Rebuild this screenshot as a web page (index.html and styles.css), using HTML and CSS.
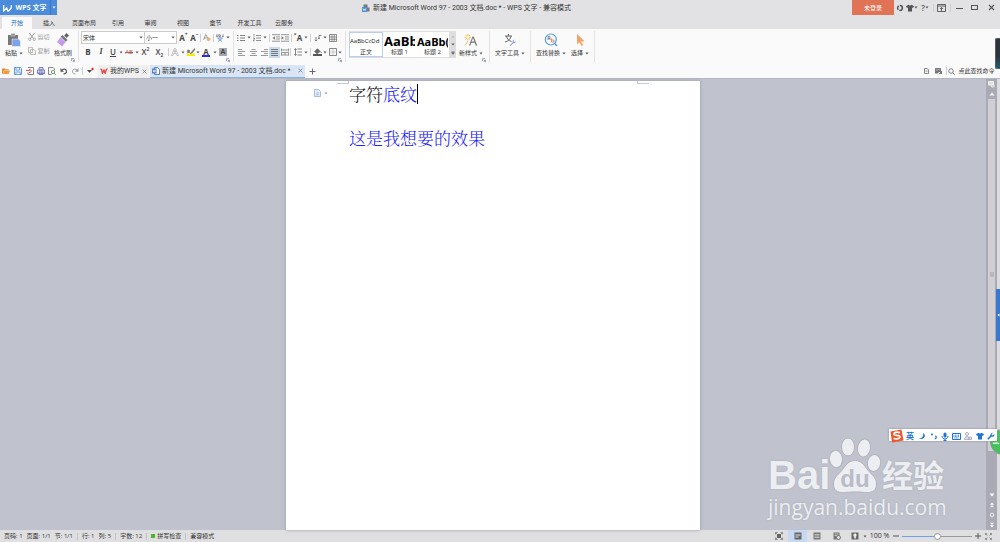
FILE: index.html
```html
<!DOCTYPE html>
<html lang="zh-CN">
<head>
    <meta charset="UTF-8">
    <meta name="viewport" content="width=device-width, initial-scale=1.0">
    <title>新建 Microsoft Word 97 - 2003 文档.doc * - WPS 文字</title>
    <link rel="stylesheet" href="styles.css">
</head>
<body>
    <!-- shared icons -->
    <svg class="sprite" aria-hidden="true">
        <symbol id="caret" viewBox="0 0 4 3"><path d="M.5 .5h3L2 2.4z" fill="#555"/></symbol>
        <symbol id="launcher" viewBox="0 0 4 4"><path d="M.5 3V.5H3M1.5 3.5h2v-2M1.6 1.6l1.7 1.7" fill="none" stroke="#8287a8" stroke-width=".7"/></symbol>
        <symbol id="doc" viewBox="0 0 8 8"><path d="M2.5.5h3l2 2v5h-5z" fill="#fff" stroke="#5b83b8"/><path d="M0 1.5h4.5v5H0z" fill="#4b7fc4"/><path d="M1 2.7l.7 2.5.6-2 .6 2 .7-2.5" fill="none" stroke="#fff" stroke-width=".6"/></symbol>
        <symbol id="shirt" viewBox="0 0 8 8"><path d="M2.4.8c.8.8 2.4.8 3.2 0L8 2.2 7 4l-1-.4v3.9H2V3.6L1 4 0 2.2z" fill="currentColor"/></symbol>
    </svg>

    <header class="titlebar">
        <button class="app-button">
            <svg width="9" height="8" viewBox="0 0 9 8"><path d="M.7 1v6l3-3 1.1 3h.7L8.3 4V1" fill="none" stroke="#fff" stroke-width="1.3"/></svg>
            <b>WPS 文字</b>
            <span class="app-drop"><svg width="4" height="3" viewBox="0 0 4 3"><path d="M.5.5h3L2 2.4z" fill="#fff"/></svg></span>
        </button>
        <div class="title">
            <svg width="8" height="8" viewBox="0 0 8 8"><path d="M1.5.5h4v3h2v4h-6z" fill="#777"/><path d="M0 3h5v5H0z" fill="#4b8fd4"/><path d="M1 4.3l.8 2.3.7-1.6.7 1.6.8-2.3" stroke="#fff" stroke-width=".6" fill="none"/></svg>
            <span>新建 Microsoft Word 97 - 2003 文档.doc * - WPS 文字 - 兼容模式</span>
        </div>
        <button class="login">未登录</button>
        <div class="window-tools">
            <button aria-label="社区"><svg width="8" height="8" viewBox="0 0 8 8"><circle cx="4" cy="4" r="2.400" fill="none" stroke="#555" stroke-width="1.500" stroke-dasharray="4 1"/></svg></button>
            <button aria-label="皮肤"><svg width="8" height="8"><use href="#shirt"/></svg><svg width="4" height="3"><use href="#caret"/></svg></button>
            <button aria-label="帮助">?<svg width="4" height="3"><use href="#caret"/></svg></button>
            <i></i>
            <button aria-label="隐藏功能区"><svg width="9" height="8" viewBox="0 0 9 8"><path d="M.5.5h8v7h-8zM.5 2h8M4.500 7V3.500M3 5l1.500-1.600L6 5" fill="none" stroke="#555" stroke-width=".9"/></svg></button>
            <i></i>
            <button aria-label="最小化"><svg width="7" height="7" viewBox="0 0 7 7"><path d="M0 4.500h7" stroke="#555"/></svg></button>
            <button aria-label="最大化"><svg width="7" height="7" viewBox="0 0 7 7"><path d="M.5 1.500h6v4h-6z" fill="none" stroke="#555" stroke-width="1.100"/></svg></button>
            <button aria-label="关闭"><svg width="7" height="7" viewBox="0 0 7 7"><path d="M1 1l5 5M6 1L1 6" stroke="#555" stroke-width="1.100"/></svg></button>
        </div>
    </header>

    <nav class="menu-tabs">
        <a href="#" class="active">开始</a>
        <a href="#">插入</a>
        <a href="#">页面布局</a>
        <a href="#">引用</a>
        <a href="#">审阅</a>
        <a href="#">视图</a>
        <a href="#">章节</a>
        <a href="#">开发工具</a>
        <a href="#">云服务</a>
    </nav>

    <section class="ribbon">
        <div class="group clipboard">
            <button class="big">
                <svg width="14" height="14" viewBox="0 0 14 14"><path d="M1 2h10v10H1z" fill="#777"/><path d="M4 .5h4V3H4z" fill="#888" stroke="#eee" stroke-width=".5"/><path d="M5 6h6.500L13.500 8v5.500H5z" fill="#7ba2ea" stroke="#fff" stroke-width=".5"/></svg>
                <span>粘贴<svg width="4" height="3"><use href="#caret"/></svg></span>
            </button>
            <div class="cut-copy">
                <button><svg width="8" height="8" viewBox="0 0 8 8"><path d="M1.500 0L5.500 5.500M6.500 0l-4 5.500" stroke="#999"/><circle cx="1.700" cy="6.300" r="1.200" fill="none" stroke="#999" stroke-width=".8"/><circle cx="6.300" cy="6.300" r="1.200" fill="none" stroke="#999" stroke-width=".8"/></svg>剪切</button>
                <button><svg width="8" height="8" viewBox="0 0 8 8"><path d="M.5.5h4v5h-4zM2.500 2.500h3.500L7.500 4v3.500h-5z" fill="#f6f6f6" stroke="#b5b5b5" stroke-width=".9"/></svg>复制</button>
            </div>
            <button class="big">
                <svg width="14" height="14" viewBox="0 0 14 14"><path d="M10.500 0L13 2.500 10.500 5 8.200 2.500z" fill="#666"/><path d="M6.500 2L11.500 7l-1.800 1.800-5-5z" fill="#777"/><path d="M4.500 4.200L9.500 9.200 6 13.500 1 9z" fill="#c59be9"/></svg>
                <span>格式刷</span>
            </button>
            <button class="launch" aria-label="剪贴板设置"><svg width="4" height="4"><use href="#launcher"/></svg></button>
        </div>

        <div class="group font">
            <div class="row font-top">
                <label class="combo"><select aria-label="字体"><option>宋体</option></select><svg width="4" height="3"><use href="#caret"/></svg></label>
                <label class="combo"><select aria-label="字号"><option>小一</option></select><svg width="4" height="3"><use href="#caret"/></svg></label>
                <button class="letter">A<sup>+</sup></button>
                <button class="letter">A<sup>−</sup></button>
                <i></i>
                <button aria-label="清除格式"><svg width="8" height="8" viewBox="0 0 8 8"><path d="M.5 6L2.500.8h.6L5 5M1.300 4h2.500" fill="none" stroke="#888" stroke-width=".8"/><path d="M5.500 3L8 5 5.500 7.500 3.500 6z" fill="#f0b070"/></svg></button>
                <i></i>
                <button aria-label="拼音"><svg width="8" height="8" viewBox="0 0 8 8"><path d="M0 1h2v1.500H0zM3 0v2.500h1.500V1H3M6 1h2M6 2.500h2" fill="none" stroke="#777" stroke-width=".7"/><path d="M1 4h6M4 3v1M2 4.500l4 3M6 4.500l-4 3" fill="none" stroke="#6b9be0" stroke-width=".9"/></svg></button>
                <button><svg width="4" height="3"><use href="#caret"/></svg></button>
            </div>
            <div class="row font-bottom">
                <button class="letter">B</button>
                <button class="letter serif"><em>I</em></button>
                <button class="letter thin"><u>U</u></button>
                <button><svg width="4" height="3"><use href="#caret"/></svg></button>
                <button class="strike"><s>AB</s></button>
                <button><svg width="4" height="3"><use href="#caret"/></svg></button>
                <button class="letter thin">X<sup>2</sup></button>
                <button class="letter thin">X<sub>2</sub></button>
                <i></i>
                <button aria-label="文字效果"><svg width="8" height="8" viewBox="0 0 8 8"><path d="M.5 7.500L3.500.5h1L7.500 7.500H6L5.300 5.500H2.700L2 7.500zM3.200 4.200h1.600L4 2z" fill="#fff" stroke="#aaa" stroke-width=".7"/></svg></button>
                <button><svg width="4" height="3"><use href="#caret"/></svg></button>
                <button aria-label="突出显示"><svg width="8" height="8" viewBox="0 0 8 8"><path d="M0 5.500h8V8H0z" fill="#f6ee00"/><path d="M.5 5V2h2v3M7.500.5L4 4.500l-1 1 2-.3L8 1.500z" fill="#777" stroke="#777" stroke-width=".5"/></svg></button>
                <button><svg width="4" height="3"><use href="#caret"/></svg></button>
                <button class="letter font-color">A</button>
                <button><svg width="4" height="3"><use href="#caret"/></svg></button>
                <button class="letter"><span class="shade">A</span></button>
            </div>
            <button class="launch" aria-label="字体设置"><svg width="4" height="4"><use href="#launcher"/></svg></button>
        </div>

        <div class="group paragraph">
            <div class="row para-top">
                <button aria-label="项目符号"><svg width="8" height="8" viewBox="0 0 8 8"><path d="M0 1.500h1.500M0 4h1.500M0 6.500h1.500M3 1.500h5M3 4h5M3 6.500h5" stroke="#777" stroke-width=".9"/></svg></button>
                <button><svg width="4" height="3"><use href="#caret"/></svg></button>
                <button aria-label="编号"><svg width="8" height="8" viewBox="0 0 8 8"><path d="M1 0v2.500M0 4h1.500v1L0 6.800h1.600M3 1.500h5M3 4h5M3 6.500h5" fill="none" stroke="#777" stroke-width=".8"/></svg></button>
                <button><svg width="4" height="3"><use href="#caret"/></svg></button>
                <i></i>
                <button aria-label="减少缩进"><svg width="8" height="8" viewBox="0 0 8 8"><path d="M0 .7h8M4 2.900h4M4 5h4M0 7.200h8" stroke="#888" stroke-width=".9"/><path d="M3 2.200v3.500L.5 4z" fill="#777"/></svg></button>
                <button aria-label="增加缩进"><svg width="8" height="8" viewBox="0 0 8 8"><path d="M0 .7h8M4 2.900h4M4 5h4M0 7.200h8" stroke="#888" stroke-width=".9"/><path d="M.5 2.200v3.500L3 4z" fill="#777"/></svg></button>
                <i></i>
                <button class="letter"><sup>×</sup>A</button>
                <button><svg width="4" height="3"><use href="#caret"/></svg></button>
                <i></i>
                <button aria-label="制表位"><svg width="8" height="8" viewBox="0 0 8 8"><path d="M2 3v4M.8 5.800L2 7l1.200-1.200M5 5V1.500h2.500M4 4l1 1 1-1" fill="none" stroke="#777" stroke-width=".9"/></svg></button>
                <button><svg width="4" height="3"><use href="#caret"/></svg></button>
                <button aria-label="表格"><svg width="8" height="8" viewBox="0 0 8 8"><path d="M.5.5h7v7h-7zM.5 3h7M.5 5.300h7M3 .5v7M5.300.5v7" fill="none" stroke="#777" stroke-width=".8"/></svg></button>
            </div>
            <div class="row para-bottom">
                <button aria-label="左对齐"><svg width="7" height="8" viewBox="0 0 7 8"><path d="M0 1.500h4M0 3.500h7M0 5.500h4M0 7.500h7" stroke="#999"/></svg></button>
                <button aria-label="居中"><svg width="7" height="8" viewBox="0 0 7 8"><path d="M1.500 1.500h4M0 3.500h7M1.500 5.500h4M0 7.500h7" stroke="#999"/></svg></button>
                <button aria-label="右对齐"><svg width="7" height="8" viewBox="0 0 7 8"><path d="M3 1.500h4M0 3.500h7M3 5.500h4M0 7.500h7" stroke="#999"/></svg></button>
                <button class="pressed" aria-label="两端对齐"><svg width="7" height="8" viewBox="0 0 7 8"><path d="M0 1.500h7M0 3.500h7M0 5.500h7M0 7.500h7" stroke="#777"/></svg></button>
                <button aria-label="分散对齐"><svg width="8" height="8" viewBox="0 0 8 8"><path d="M.5.500v3M7.500.5v3M1 2h6M.5 4.500h7M.5 7h7M.5 4.500v3M7.500 4.500v3M4 4.500V7" fill="none" stroke="#888" stroke-width=".9"/></svg></button>
                <i></i>
                <button aria-label="行距"><svg width="8" height="8" viewBox="0 0 8 8"><path d="M3.500 1H8M3.500 4H8M3.500 7H8M1.500.5v7M.3 2L1.500.6 2.700 2M.3 6l1.200 1.400L2.700 6" fill="none" stroke="#777" stroke-width=".9"/></svg></button>
                <button><svg width="4" height="3"><use href="#caret"/></svg></button>
                <i></i>
                <button aria-label="底纹颜色"><svg width="9" height="8" viewBox="0 0 9 8"><path d="M0 6h9v2H0z" fill="#555"/><path d="M1.500 3.500L4.500.8l2.700 2.700L4 5.800zM7.500 3.500L8.500 5" fill="#666" stroke="#666" stroke-width=".7"/></svg></button>
                <button><svg width="4" height="3"><use href="#caret"/></svg></button>
                <button aria-label="边框"><svg width="8" height="8" viewBox="0 0 8 8"><path d="M.5.5h7v7h-7z" fill="none" stroke="#777" stroke-width=".9"/><path d="M.5 4h7M4 .5v7" stroke="#bbb" stroke-width=".8"/></svg></button>
                <button><svg width="4" height="3"><use href="#caret"/></svg></button>
            </div>
            <button class="launch" aria-label="段落设置"><svg width="4" height="4"><use href="#launcher"/></svg></button>
        </div>

        <div class="group styles">
            <div class="gallery">
                <button class="style selected"><span class="sample">AaBbCcDd</span>正文</button>
                <button class="style"><span class="sample heading-1">AaBb</span>标题 1</button>
                <button class="style"><span class="sample heading-2">AaBb(</span>标题 2</button>
                <div class="gallery-scroll">
                    <button disabled><svg width="4" height="3" viewBox="0 0 4 3"><path d="M.5 2.400h3L2 .5z" fill="#bbb"/></svg></button>
                    <button><svg width="4" height="3"><use href="#caret"/></svg></button>
                    <button><svg width="4" height="4" viewBox="0 0 4 4"><path d="M.5.500h3M.5 1.600h3L2 3.500z" stroke="#555" stroke-width=".4" fill="#555"/></svg></button>
                </div>
            </div>
            <button class="big">
                <svg width="14" height="14" viewBox="0 0 14 14"><path d="M5 12.500L8.500 3.500h1.200L13.200 12.500h-1.500l-.9-2.700H7.300l-.9 2.700zM7.700 8.600h2.700L9 5z" fill="#777"/><path d="M3.800 1v6.500M.7 4.200H7M1.500 2l4.600 4.500M6.100 2L1.500 6.500M1 12.500L4 8" stroke="#edb64e" stroke-width=".9"/><circle cx="3.800" cy="4.200" r="1.500" fill="#fff3c8"/></svg>
                <span>新样式<svg width="4" height="3"><use href="#caret"/></svg></span>
            </button>
            <button class="launch" aria-label="样式设置"><svg width="4" height="4"><use href="#launcher"/></svg></button>
        </div>

        <div class="group text-tools">
            <button class="big">
                <svg width="14" height="14" viewBox="0 0 14 14"><path d="M2 3h7M5.500 1v2M3.500 3c.5 3 2 4.500 5 5.500M8 3C7.500 6 5.500 8 2 9" fill="none" stroke="#666"/><path d="M6.500 12.500l3-3c-.5-2 1-3 2-2.700L10.300 8l.8 1 1.500-1c.3 1.500-1 2.700-2.500 2.300l-2.500 2.700z" fill="#8fa3dc"/></svg>
                <span>文字工具<svg width="4" height="3"><use href="#caret"/></svg></span>
            </button>
        </div>

        <div class="group editing">
            <button class="big">
                <svg width="14" height="14" viewBox="0 0 14 14"><circle cx="6.800" cy="6.500" r="5.500" fill="#f4f9ff" stroke="#5b9be0" stroke-width="1.200"/><path d="M10.800 10.500L13 13" stroke="#5b9be0" stroke-width="1.600"/><path d="M4 7V3.500h2V7M4 5.500h2" fill="none" stroke="#777" stroke-width=".8"/><path d="M7.500 5.500v3.500h2.500V7H7.500" fill="none" stroke="#db8b55" stroke-width=".9"/></svg>
                <span>查找替换<svg width="4" height="3"><use href="#caret"/></svg></span>
            </button>
            <button class="big">
                <svg width="14" height="14" viewBox="0 0 14 14"><path d="M4 1l7.500 7.300-3.300.2 2 3.800-1.700.8-1.900-3.900L4 11.500z" fill="#f2a566"/></svg>
                <span>选择<svg width="4" height="3"><use href="#caret"/></svg></span>
            </button>
        </div>
    </section>

    <div class="doc-tabs">
        <div class="quick">
            <button aria-label="打开"><svg width="8" height="8" viewBox="0 0 8 8"><path d="M0 1.500h3l.7.800h3v1H2L.5 7H0z" fill="#e88a2c"/><path d="M2 3.500h6L6.700 7H.8z" fill="#f39a3c"/></svg></button>
            <button aria-label="保存"><svg width="8" height="8" viewBox="0 0 8 8"><path d="M.5.5h6l1 1v6h-7z" fill="#dcebff" stroke="#5c97e0"/><path d="M2 .5h3.500V3H2zM2 5h4v2.500H2z" fill="#fff" stroke="#5c97e0" stroke-width=".8"/></svg></button>
            <button aria-label="输出为PDF"><svg width="8" height="8" viewBox="0 0 8 8"><path d="M2 .5h5.500v7H2V5.500" fill="none" stroke="#777" stroke-width=".9"/><path d="M0 3.500h3.500V2l2 2-2 2V5" fill="none" stroke="#d44" stroke-width=".9"/></svg></button>
            <button aria-label="打印"><svg width="8" height="8" viewBox="0 0 8 8"><path d="M2 .5h4V3H2zM.5 3h7v3.500h-7zM2 5h4v2.500H2z" fill="#dde" stroke="#7277b8" stroke-width=".9"/></svg></button>
            <button aria-label="打印预览"><svg width="8" height="8" viewBox="0 0 8 8"><path d="M3.500 7.500h-3v-7H5l1.500 1.500V3" fill="none" stroke="#777" stroke-width=".9"/><circle cx="5" cy="5" r="1.700" fill="none" stroke="#5a9a55" stroke-width=".9"/><path d="M6.200 6.200L7.800 7.800" stroke="#5a9a55"/></svg></button>
            <button aria-label="撤销"><svg width="8" height="8" viewBox="0 0 8 8"><path d="M1.500 3.500C3 1.500 6.500 1.500 6.500 4.300 6.500 6 5 7 3.500 7" fill="none" stroke="#555" stroke-width="1.100"/><path d="M.5 1v3.700h3.500z" fill="#555"/></svg></button>
            <button aria-label="恢复"><svg width="8" height="8" viewBox="0 0 8 8"><path d="M6.500 3.500C5 1.500 1.500 1.500 1.500 4.300 1.500 6 3 7 4.500 7" fill="none" stroke="#999"/><path d="M7.500 1v3.700H4z" fill="#999"/></svg></button>
            <i></i>
            <button aria-label="更多"><svg width="8" height="8" viewBox="0 0 8 8"><path d="M1 3h5L3.500 5.800z" fill="#444"/><circle cx="6.500" cy="2" r="1.200" fill="#e22"/></svg></button>
        </div>
        <div class="doc-tab">
            <svg width="8" height="7" viewBox="0 0 8 7"><path d="M.3 1h1.500l.8 4L4 1.500 5 5l1.300-4h1.500M1.200 1l1.200 5L4 2.500 5.200 6 6.700 1" fill="none" stroke="#df4545" stroke-width=".9"/></svg>
            <span>我的WPS</span>
            <button aria-label="关闭"><svg width="5" height="5" viewBox="0 0 5 5"><path d="M.7.700l3.600 3.600M4.300.7L.7 4.300" stroke="#777" stroke-width=".8"/></svg></button>
        </div>
        <div class="doc-tab current">
            <svg width="8" height="8"><use href="#doc"/></svg>
            <span>新建 Microsoft Word 97 - 2003 文档.doc *</span>
            <button aria-label="关闭"><svg width="5" height="5" viewBox="0 0 5 5"><path d="M.7.700l3.600 3.600M4.300.7L.7 4.300" stroke="#777" stroke-width=".8"/></svg></button>
        </div>
        <button class="new-tab" aria-label="新建"><svg width="7" height="7" viewBox="0 0 7 7"><path d="M3.500.5v6M.5 3.500h6" stroke="#666"/></svg></button>
        <div class="doc-tools">
            <button aria-label="文档"><svg width="5" height="6" viewBox="0 0 5 6"><path d="M.5.5h2.700l1.300 1.400v3.600h-4zM1.500 3h2" fill="none" stroke="#777" stroke-width=".9"/></svg></button>
            <button aria-label="批注"><svg width="7" height="6" viewBox="0 0 7 6"><path d="M.5.500h5v3h-5zM0 4h3v1H0zM3 2l3.500 3.500M6.500 3v2.500H4" fill="#999" stroke="#666" stroke-width=".8"/></svg></button>
            <i></i>
            <button class="find"><svg width="7" height="7" viewBox="0 0 7 7"><circle cx="3" cy="3" r="2.300" fill="none" stroke="#666" stroke-width=".8"/><path d="M4.700 4.700L6.700 6.700" stroke="#666"/></svg>点此查找命令</button>
        </div>
    </div>

    <main class="workspace">
        <div class="canvas">
            <article class="page">
                <span class="corner left"></span>
                <span class="corner right"></span>
                <button class="smart-tag" aria-label="段落布局"><svg width="7" height="8" viewBox="0 0 7 8"><path d="M.5.500h4l2 2v5h-6zM2 4h3M2 5.800h3" fill="#e4eefb" stroke="#9db9de" stroke-width=".9"/></svg><svg width="4" height="3" opacity=".6"><use href="#caret"/></svg></button>
                <p>字符<span class="blue">底纹</span><span class="cursor"></span></p>
                <p><br></p>
                <p><span class="blue">这是我想要的效果</span></p>
            </article>
        </div>
        <div class="scrollbar">
            <button aria-label="标尺"><svg width="7" height="7" viewBox="0 0 7 7"><path d="M.5.500h5v3.500h-5z" fill="#ddd" stroke="#fff" stroke-width=".8"/><circle cx="4.700" cy="4.700" r="1.500" fill="#ccc" stroke="#fff" stroke-width=".7"/></svg></button>
            <button aria-label="向上"><svg width="6" height="4" viewBox="0 0 6 4"><path d="M.5 3.500h5L3 .5z" fill="#fff"/></svg></button>
            <div class="track"><div class="thumb"><span class="grip"></span></div></div>
            <button aria-label="向下"><svg width="6" height="4" viewBox="0 0 6 4"><path d="M.5.500h5L3 3.500z" fill="#fff"/></svg></button>
            <button aria-label="上一页"><svg width="6" height="6" viewBox="0 0 6 6"><path d="M1 2.700L3 .5l2 2.200zM1 5.200L3 3l2 2.200z" fill="#fff"/></svg></button>
            <button aria-label="选择对象"><svg width="6" height="6" viewBox="0 0 6 6"><circle cx="3" cy="3" r="1.800" fill="none" stroke="#fff" stroke-width=".8"/></svg></button>
            <button aria-label="下一页"><svg width="6" height="6" viewBox="0 0 6 6"><path d="M1 .8h4L3 3zM1 3.200h4L3 5.500z" fill="#fff"/></svg></button>
        </div>
        <div class="edge"></div>

        <div class="watermark">
            <div class="brand">
                <b class="bai">Bai</b>
                <span class="paw">
                    <svg width="54" height="56" viewBox="0 0 54 56"><g fill="#eceef2" stroke="#b0b3bd" stroke-width="1"><ellipse cx="8" cy="22" rx="6.500" ry="8.700" transform="rotate(-8 8 22)"/><ellipse cx="20" cy="10" rx="6.500" ry="9"/><ellipse cx="36" cy="11" rx="6.500" ry="9" transform="rotate(8 36 11)"/><ellipse cx="46" cy="26" rx="6.700" ry="8.500" transform="rotate(8 46 26)"/><path d="M27 23.500c8 0 10 7 15 12 4 4 7 7 6.500 12.500-.5 7-6 8-12 7.500-4-.5-6-.5-9.500-.5s-5 0-9.500.5c-6 .5-11.500-.5-12-7.500C5 42.500 8 39.500 12 35.500c5-5 7-12 15-12z"/></g></svg>
                    <b>du</b>
                </span>
                <b class="jingyan">经验</b>
            </div>
            <div class="url">jingyan.baidu.com</div>
        </div>
    </main>

    <footer class="statusbar">
        <div class="status-info">
            <span>页码: 1</span>
            <span>页面: 1/1</span>
            <span>节: 1/1</span>
            <i></i>
            <span>行: 1</span>
            <span>列: 5</span>
            <i></i>
            <span>字数: 12</span>
            <i></i>
            <button><em class="dot"></em>拼写检查</button>
            <i></i>
            <span>兼容模式</span>
        </div>
        <div class="view-tools">
            <button aria-label="全屏"><svg width="8" height="8" viewBox="0 0 8 8"><path d="M2 2h4v4H2z" fill="#555"/><path d="M.5 2.500v-2h2M5.500.5h2v2M7.500 5.500v2h-2M2.500 7.500h-2v-2M.5.500l7 7M7.500.5l-7 7" fill="none" stroke="#777" stroke-width=".8"/></svg></button>
            <button class="active" aria-label="页面视图"><svg width="8" height="8" viewBox="0 0 8 8"><path d="M.5.500h7v7h-7z" fill="#666"/><path d="M1.500 3h5M1.500 5h3" stroke="#dce6f5"/></svg></button>
            <button aria-label="大纲视图"><svg width="8" height="8" viewBox="0 0 8 8"><path d="M.5.500h7v7h-7z" fill="#777"/><path d="M1.500 2.500h5M1.500 4h5M1.500 5.500h5" stroke="#ddd" stroke-width=".7"/></svg></button>
            <button aria-label="Web版式"><svg width="8" height="8" viewBox="0 0 8 8"><path d="M.5.500h6v7h-6z" fill="#777"/><path d="M1.500 2h4M1.500 3.500h3" stroke="#ddd" stroke-width=".7"/><circle cx="5.500" cy="5.500" r="2" fill="#ddd" stroke="#777"/></svg></button>
            <button aria-label="护眼模式"><svg width="8" height="8" viewBox="0 0 8 8"><path d="M.5.500h7v7h-7z" fill="#666"/><path d="M4 1.500c2 0 2 2.500.8 3.300V6.500H3.200V4.800C2 4 2 1.500 4 1.500z" fill="#eee"/></svg></button>
            <button><svg width="4" height="3"><use href="#caret"/></svg></button>
            <span>100 %</span>
            <button aria-label="缩小"><svg width="6" height="6" viewBox="0 0 6 6"><path d="M0 3h6" stroke="#555"/></svg></button>
            <input type="range" min="0" max="100" value="50" aria-label="显示比例">
            <button aria-label="放大"><svg width="6" height="6" viewBox="0 0 6 6"><path d="M0 3h6M3 0v6" stroke="#555"/></svg></button>
            <button aria-label="最佳显示比例"><svg width="7" height="7" viewBox="0 0 7 7"><path d="M.5 2V.5H2M5 .5h1.500V2M6.500 5v1.500H5M2 6.500H.5V5M1 1l1.500 1.500M6 1L4.500 2.500M6 6L4.500 4.500M1 6l1.500-1.500" fill="none" stroke="#777" stroke-width=".8"/></svg></button>
        </div>
    </footer>

    <!-- things floating over the window -->
    <div class="dock-handle"></div>
    <button class="side-handle" aria-label="展开"><svg width="3" height="4" viewBox="0 0 3 4"><path d="M2.500.5v3L.3 2z" fill="#fff"/></svg></button>
    <svg class="ball" width="10" height="26" viewBox="0 0 10 26"><circle cx="13" cy="13" r="12.500" fill="#45c25c" stroke="#8a9a90" stroke-width="1"/><path d="M3 14c2 1 4-1 6 1" stroke="#d9f7df" stroke-width="1.500" fill="none"/></svg>
    <div class="ime">
        <svg class="ime-logo" width="15" height="14" viewBox="0 0 15 14"><path d="M1.500 2.500L12.500.5l2 11-11.500 2z" fill="#f0562a"/><path d="M11 3.800C8 2.500 4.500 3.500 5 5.400c.5 1.500 5.800.3 6 2.200.2 2-4 2.800-6.500 1.600" fill="none" stroke="#fff" stroke-width="1.700"/></svg>
        <button><b>英</b></button>
        <button aria-label="半角"><svg width="8" height="8" viewBox="0 0 8 8"><path d="M5 .8C9 3.500 6 8.500.5 6.500 4 6.500 6 4 5 .8z" fill="#1f74d0"/></svg></button>
        <button aria-label="标点"><svg width="8" height="8" viewBox="0 0 8 8"><circle cx="2" cy="2.500" r="1" fill="#1f74d0"/><path d="M5 4c2 0 1.500 2 0 3" fill="none" stroke="#1f74d0" stroke-width="1.200"/></svg></button>
        <button aria-label="语音"><svg width="8" height="9" viewBox="0 0 8 9"><rect x="2.500" y=".5" width="3" height="5" rx="1.500" fill="#1f74d0"/><path d="M1 4c0 4 6 4 6 0M4 7v1.500M2.500 8.500h3" fill="none" stroke="#1f74d0"/></svg></button>
        <button aria-label="键盘"><svg width="9" height="7" viewBox="0 0 9 7"><path d="M.5.500h8v6h-8z" fill="#fff" stroke="#1f74d0"/><path d="M1.500 2.200h6M1.500 3.600h6M2.500 5h4" stroke="#1f74d0" stroke-width=".9" stroke-dasharray="1 .5"/></svg></button>
        <button aria-label="登录"><svg width="8" height="8" viewBox="0 0 8 8"><circle cx="3" cy="2" r="1.500" fill="none" stroke="#aab"/><path d="M.5 7.500c0-4 5-4 5 0zM4.500 5h3v2.500h-3z" fill="#dde" stroke="#aab" stroke-width=".8"/></svg></button>
        <button class="blue-icon" aria-label="皮肤"><svg width="8" height="8"><use href="#shirt"/></svg></button>
        <button aria-label="工具"><svg width="8" height="8" viewBox="0 0 8 8"><path d="M.8 7.200L4.500 3.500" stroke="#1f74d0" stroke-width="1.600"/><path d="M6 .7L4.700 2v1.300h1.300L7.400 2C8 4 6 5.500 4.300 4.600 2.500 3 4 .3 6 .7z" fill="#1f74d0"/></svg></button>
    </div>
</body>
</html>
```
FILE: styles.css
```css
* {
    box-sizing: border-box;
}
body {
    margin: 0;
    min-height: 100vh;
    display: flex;
    flex-direction: column;
    overflow: hidden;
    font-family: "Open Sans", "Noto Sans CJK SC", sans-serif;
    font-size: 6px;
    line-height: 8px;
    color: #333;
    background: #e2e2e4;
    white-space: nowrap;
}
svg {
    display: block;
    flex: none;
}
button {
    display: flex;
    align-items: center;
    justify-content: center;
    padding: 0;
    border: none;
    background: none;
    font: inherit;
    color: inherit;
    white-space: nowrap;
}
.sprite {
    position: absolute;
    width: 0;
    height: 0;
}

/* title bar */
.titlebar {
    display: flex;
    height: 15px;
    margin-bottom: 2px;
}
.app-button {
    width: 57px;
    padding-left: 3px;
    justify-content: space-between;
    background: #4a8cdb;
    color: #fff;
    font-size: 7px;
}
.app-drop {
    display: flex;
    align-items: center;
    justify-content: center;
    width: 7px;
    height: 15px;
    border-left: 1px solid #3b78c4;
}
.title {
    flex: 1;
    display: flex;
    align-items: center;
    justify-content: center;
    gap: 3px;
    padding-left: 24px;
    font-family: Roboto, "Noto Sans CJK SC", sans-serif;
    font-size: 7px;
}
.login {
    width: 42px;
    background: #e07256;
    color: #fff;
}
.window-tools {
    display: grid;
    grid-template-columns: 11px 13px 14px 2px 15px 3px 15px 15px 18px;
    align-items: center;
    width: 106px;
}
.window-tools button {
    font-size: 8px;
    font-weight: 600;
    color: #555;
}
.window-tools i,
.quick i,
.doc-tools i,
.row i {
    width: 1px;
    height: 8px;
    background: #d0d0d0;
    justify-self: center;
}

/* menu tabs */
.menu-tabs {
    display: grid;
    grid-template-columns: 30px 34px 36px 32px 33px 32px 33px 35px 34px;
    height: 12px;
    padding-left: 2px;
}
.menu-tabs a {
    line-height: 12px;
    text-align: center;
    text-decoration: none;
    color: #333;
}
.menu-tabs .active {
    background: #fafafa;
    color: #2f6fc0;
}

/* ribbon */
.ribbon {
    display: flex;
    height: 35px;
    background: #fafafa;
}
.group {
    position: relative;
    display: flex;
    margin: 2px 0;
    border-right: 1px solid #e2e2e2;
}
.big {
    flex-direction: column;
    justify-content: flex-start;
    gap: 2px;
    padding-top: 2px;
}
.big span {
    display: flex;
    align-items: center;
    gap: 2px;
    height: 8px;
}
.launch {
    position: absolute;
    right: 3px;
    bottom: 0;
}
.clipboard {
    width: 79px;
    padding-left: 5px;
    gap: 4px;
}
.cut-copy {
    display: grid;
    grid-template-rows: 12px 16px;
    width: 23px;
    color: #999;
}
.cut-copy button {
    gap: 2px;
}
.font {
    flex-direction: column;
    width: 155px;
    padding-left: 2px;
}
.row {
    display: grid;
    align-items: center;
}
.row button {
    height: 11px;
}
.font-top {
    grid-template-columns: 64px 32px 13px 9px 3px 10px 2px 11px 5px;
    height: 13px;
}
.font-bottom {
    grid-template-columns: 14px 12px 12px 4px 12px 4px 13px 15px 3px 10px 5px 11px 4px 12px 5px 12px;
    height: 16px;
}
.combo {
    display: flex;
    align-items: center;
    height: 13px;
    padding: 0 1px;
    border: 1px solid #ccc;
    background: #fff;
}
.combo + .combo {
    border-left: none;
}
.combo select {
    flex: 1;
    min-width: 0;
    padding: 0;
    border: none;
    appearance: none;
    background: none;
    font: inherit;
    color: inherit;
}
.letter {
    font-size: 8px;
    font-weight: bold;
    color: #444;
}
.letter.thin {
    font-weight: 600;
}
.letter.serif {
    font-family: "Liberation Serif", serif;
}
.letter sup,
.letter sub {
    font-size: 5px;
    line-height: 5px;
    align-self: flex-start;
}
.letter sub {
    align-self: flex-end;
}
.strike {
    color: #a55;
}
.row .font-color {
    height: 9px;
    line-height: 7px;
    width: 8px;
    justify-self: center;
    border-bottom: 2px solid #2a2af0;
}
.shade {
    width: 8px;
    height: 8px;
    background: #a4a8b0;
    font-size: 7px;
    text-align: center;
}
.paragraph {
    flex-direction: column;
    width: 112px;
    padding-left: 1px;
}
.para-top {
    grid-template-columns: 12px 4px 12px 4px 4px 9px 10px 2px 12px 4px 5px 9px 5px 11px;
    height: 13px;
}
.para-bottom {
    grid-template-columns: 13px 11px 10px 11px 9px 3px 12px 4px 5px 9px 5px 11px 4px;
    height: 16px;
}
.pressed {
    background: #c9dcf3;
}
.styles {
    width: 144px;
    padding-left: 3px;
    gap: 3px;
}
.gallery {
    display: grid;
    grid-template-columns: 34px 33px 33px 7px;
    height: 27px;
    border: 1px solid #ddd;
    border-width: 1px 0;
    background: #fff;
}
.style {
    flex-direction: column;
    overflow: hidden;
    border: 1px solid transparent;
}
.style.selected {
    border-color: #b9cff0;
}
.sample {
    display: block;
    width: 100%;
    height: 15px;
    line-height: 17px;
    overflow: hidden;
    text-align: left;
    font-size: 6px;
    color: #222;
}
.heading-1 {
    font-size: 13px;
    font-weight: bold;
    color: #000;
}
.heading-2 {
    font-size: 11px;
    font-weight: bold;
    color: #000;
}
.gallery-scroll {
    display: grid;
    grid-template-rows: 8px 8px 9px;
    background: #ddd;
}
.text-tools {
    width: 41px;
    padding-left: 5px;
}
.editing {
    width: 64px;
    padding-left: 5px;
    gap: 5px;
}

/* document tabs */
.doc-tabs {
    display: flex;
    align-items: center;
    height: 15px;
    background: #fafafa;
    border-bottom: 1px solid #b4b7c2;
}
.quick {
    display: grid;
    grid-template-columns: 12px 12px 11px 11px 12px 11px 12px 3px 12px;
    align-items: center;
    width: 98px;
}
.doc-tab {
    display: flex;
    align-items: center;
    gap: 2px;
    width: 51px;
    height: 13px;
    padding: 0 2px;
    background: #efeff0;
    font-family: Roboto, "Noto Sans CJK SC", sans-serif;
    font-size: 7px;
}
.doc-tab span {
    flex: 1;
}
.doc-tab.current {
    width: 155px;
    margin-left: 1px;
    background: #d9e5f4;
    border-bottom: 1px solid #8db2de;
}
.new-tab {
    width: 14px;
}
.doc-tools {
    display: grid;
    grid-template-columns: 12px 13px 2px 49px;
    align-items: center;
    margin-left: auto;
    padding-right: 4px;
}
.find {
    gap: 3px;
}

/* workspace */
.workspace {
    position: relative;
    flex: 1;
    display: flex;
    background: #c0c3cd;
}
.canvas {
    flex: 1;
    display: flex;
    justify-content: center;
    padding-top: 2px;
}
.page {
    position: relative;
    width: 42%;
    padding: 2px 63px;
    background: #fff;
    box-shadow: 0 0 3px #9295a0;
    font-family: "Noto Serif CJK SC", "Noto Sans CJK SC", serif;
    font-size: 17px;
    font-weight: 300;
    line-height: 22px;
    color: #111;
}
.page p {
    display: flex;
    align-items: center;
    height: 22px;
    margin: 0;
}
.blue {
    color: #2222f5;
}
.cursor {
    width: 1px;
    height: 20px;
    background: #000;
}
.corner {
    position: absolute;
    top: 0;
    width: 12px;
    height: 3px;
    border-bottom: 1px solid #ccc;
}
.corner.left {
    left: 51px;
    border-right: 1px solid #ccc;
}
.corner.right {
    right: 51px;
    border-left: 1px solid #ccc;
}
.smart-tag {
    position: absolute;
    top: 8px;
    left: 28px;
    gap: 3px;
}
.scrollbar {
    display: flex;
    flex-direction: column;
    width: 11px;
    background: #a9aab5;
}
.scrollbar button {
    height: 10px;
}
.track {
    flex: 1;
    padding: 0 2px;
}
.thumb {
    display: flex;
    align-items: center;
    justify-content: center;
    height: 90%;
    background: #d0d0d4;
}
.grip {
    width: 4px;
    height: 5px;
    background: #b8b8bb;
}
.edge {
    width: 3px;
    background: #dcdcde;
}

/* watermark */
.watermark {
    position: absolute;
    right: 52px;
    bottom: 8px;
    width: 180px;
    color: #eceef2;
    text-shadow: 0 0 2px #a4a7b2;
}
.brand {
    display: flex;
    align-items: flex-end;
    height: 57px;
}
.bai {
    width: 60px;
    font-family: "Liberation Sans", sans-serif;
    font-size: 40px;
    line-height: 36px;
}
.paw {
    position: relative;
    width: 54px;
}
.paw b {
    position: absolute;
    left: 0;
    right: 0;
    bottom: 2px;
    font-family: "Liberation Sans", sans-serif;
    font-size: 24px;
    line-height: 24px;
    text-align: center;
    color: #b9bcc6;
    text-shadow: none;
}
.jingyan {
    font-size: 31px;
    line-height: 36px;
}
.url {
    font-size: 21px;
    line-height: 29px;
}

/* status bar */
.statusbar {
    display: flex;
    justify-content: space-between;
    align-items: center;
    height: 12px;
    background: #dfdfe1;
}
.status-info {
    display: flex;
    align-items: center;
    gap: 4px;
    padding-left: 4px;
}
.status-info i {
    width: 1px;
    height: 7px;
    background: #c4c4c6;
}
.status-info button {
    gap: 2px;
}
.dot {
    width: 4px;
    height: 4px;
    background: #4cb52c;
}
.view-tools {
    display: grid;
    grid-template-columns: 19px 19px 20px 19px 17px 4px 25px 8px 74px 8px 12px;
    align-items: center;
    padding-right: 6px;
}
.view-tools button {
    height: 12px;
}
.view-tools .active {
    background: #c6d9f2;
}
.view-tools span {
    font-size: 7px;
    text-align: center;
}
.view-tools input {
    width: 70px;
    height: 8px;
    margin: 0 2px;
    appearance: none;
    background: linear-gradient(to right, #6fa3e6 50%, #999 50%) center / 100% 1px no-repeat;
}
.view-tools input::-webkit-slider-thumb {
    appearance: none;
    width: 7px;
    height: 7px;
    border: 1px solid #999;
    border-radius: 50%;
    background: #fff;
}

/* floating pieces */
.dock-handle {
    position: absolute;
    top: 38px;
    right: 0;
    width: 5px;
    height: 31px;
    border: 1px solid #555b62;
    border-right: none;
    border-radius: 2px 0 0 2px;
    background: linear-gradient(#2b333b 60%, #1f5c78);
}
.side-handle {
    position: absolute;
    top: 289px;
    right: 0;
    width: 4px;
    height: 52px;
    background: #3a78cf;
}
.ball {
    position: absolute;
    right: 0;
    bottom: 87px;
}
.ime {
    position: absolute;
    right: 3px;
    bottom: 101px;
    display: grid;
    grid-template-columns: 15px 12px 12px 11px 12px 11px 12px 11px 12px;
    align-items: center;
    width: 108px;
    height: 12px;
    background: #fff;
    box-shadow: 0 0 2px #8a8d98;
}
.ime b {
    font-size: 8px;
    color: #1f74d0;
}
.blue-icon {
    color: #1f74d0;
}
```
